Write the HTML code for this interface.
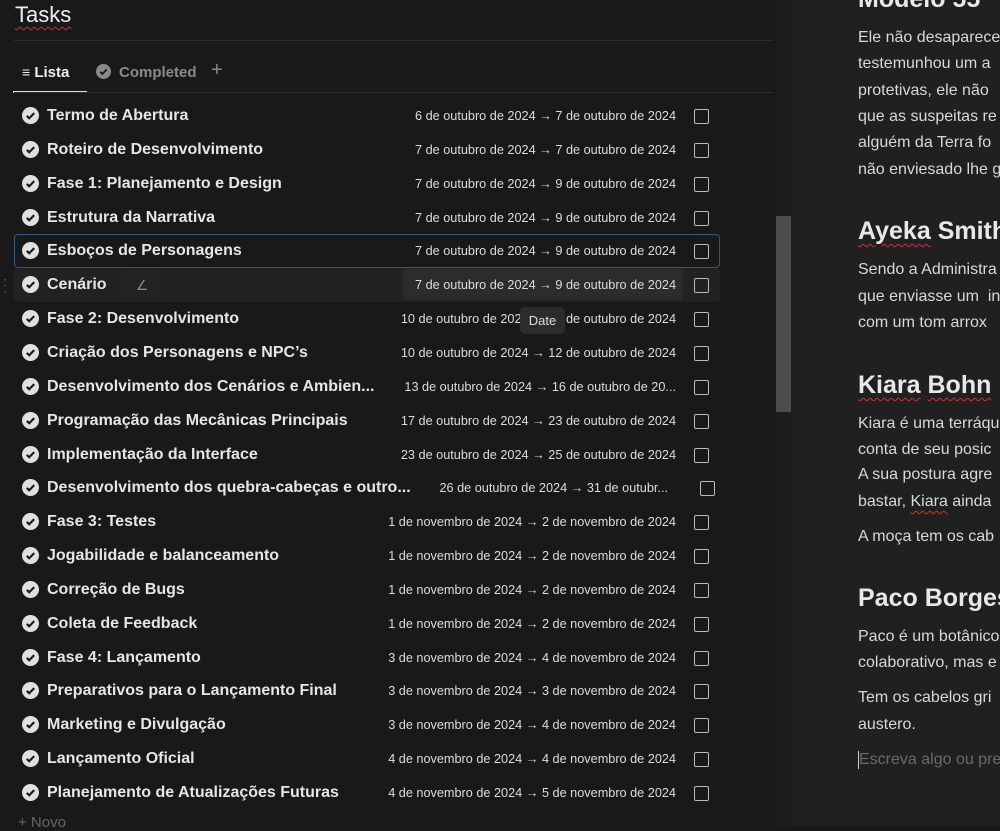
<!DOCTYPE html>
<html><head><meta charset="utf-8"><style>
*{margin:0;padding:0;box-sizing:border-box}
body{width:1000px;height:826px;overflow:hidden;background:#191919;font-family:"Liberation Sans",sans-serif;color:#e3e3e3;position:relative}
#left{position:absolute;left:0;top:0;width:776px;height:826px;background:#191919}
#sb{position:absolute;left:776px;top:0;width:16px;height:826px;background:#1c1c1c}
#thumb{position:absolute;left:776px;top:216px;width:15px;height:196px;background:#4c4c4c}
#right{position:absolute;left:792px;top:0;width:208px;height:826px;background:#202020;overflow:hidden}
.title{position:absolute;left:15px;top:2px;font-size:22px;color:#eee;text-decoration:underline wavy #c33;text-underline-offset:4px;text-decoration-thickness:1px}
.hr{position:absolute;left:14px;width:760px;height:1px;background:#2e2e2e}
.tab{position:absolute;top:64px;font-size:15px;font-weight:bold}
.row{position:absolute;left:14px;width:706px;height:34px}
.row .ic{position:absolute;left:8px;top:8px;width:17px;height:17px}
.row .t{position:absolute;left:33px;top:8px;font-size:16px;font-weight:bold;color:#e6e6e6;white-space:nowrap}
.row .d{position:absolute;right:44px;top:10px;font-size:12.7px;color:#dcdcdc;white-space:nowrap}
.row .cb{position:absolute;left:680px;top:10px;width:15px;height:15px;border:1.5px solid #bbb;border-radius:2px}
.rp{position:absolute;left:66px;white-space:nowrap;font-size:16px;color:#d8d8d8}
.rh{position:absolute;left:66px;white-space:nowrap;font-size:25px;font-weight:bold;color:#e8e8e8}
.sq{text-decoration:underline wavy #c33;text-decoration-thickness:1px;text-underline-offset:4px}
</style></head><body>
<div id="left">
<div class="title">Tasks</div>
<div class="hr" style="top:40px"></div>
<div class="tab" style="left:22px;color:#eee"><span style="font-size:14px;font-weight:normal">&#8801;</span> Lista</div>
<div style="position:absolute;left:13px;top:91px;width:74px;height:2px;background:#ddd"></div>
<svg style="position:absolute;left:96px;top:64px" width="15" height="15" viewBox="0 0 16 16"><circle cx="8" cy="8" r="8" fill="#8a8a8a"/><path d="M4.5 8.3l2.3 2.3 4.7-4.8" stroke="#191919" stroke-width="2" fill="none"/></svg>
<div class="tab" style="left:119px;color:#8a8a8a">Completed</div>
<div class="tab" style="left:211px;top:59px;color:#8a8a8a;font-size:20px;font-weight:normal">+</div>
<div class="hr" style="top:92px"></div>

<div class="row" style="top:234px;border:1px solid #2a5a8a;border-radius:4px"></div>
<div class="row" style="top:268px;background:#222;border-radius:4px"></div>
<div style="position:absolute;left:403px;top:269px;width:280px;height:31px;background:#2c2c2c;border-radius:4px"></div>
<div style="position:absolute;left:126px;top:271px;width:32px;height:28px;background:#232323;border-radius:4px;color:#888;font-size:14px;text-align:center;line-height:28px">&#8736;</div>
<div style="position:absolute;left:3px;top:276px;color:#777;font-size:12px;line-height:6px">&#183;<br>&#183;<br>&#183;</div>
<div id="rows"></div>
<div style="position:absolute;left:520px;top:307px;width:45px;height:27px;background:#2c2c2c;border-radius:5px;font-size:13px;color:#ddd;text-align:center;line-height:27px">Date</div>
<div style="position:absolute;left:18px;top:814px;font-size:15px;color:#666">+ Novo</div>
</div>
<div id="sb"></div><div id="thumb"></div>
<div id="right">
<div class="rh" style="top:-15px">Modelo 55</div>
<div class="rp" style="top:29px">Ele não desaparece</div>
<div class="rp" style="top:55px">testemunhou um a</div>
<div class="rp" style="top:82px">protetivas, ele não</div>
<div class="rp" style="top:108px">que as suspeitas re</div>
<div class="rp" style="top:134px">alguém da Terra fo</div>
<div class="rp" style="top:161px">não enviesado lhe g</div>
<div class="rh" style="top:217px"><span class="sq">Ayeka</span> Smith</div>
<div class="rp" style="top:261px">Sendo a Administra</div>
<div class="rp" style="top:288px">que enviasse um &nbsp;in</div>
<div class="rp" style="top:314px">com um tom arrox</div>
<div class="rh" style="top:371px"><span class="sq">Kiara</span> <span class="sq">Bohn</span></div>
<div class="rp" style="top:415px">Kiara é uma terráqu</div>
<div class="rp" style="top:441px">conta de seu posic</div>
<div class="rp" style="top:466px">A sua postura agre</div>
<div class="rp" style="top:493px">bastar, <span class="sq">Kiara</span> ainda</div>
<div class="rp" style="top:528px">A moça tem os cab</div>
<div class="rh" style="top:584px">Paco Borges</div>
<div class="rp" style="top:628px">Paco é um botânico</div>
<div class="rp" style="top:654px">colaborativo, mas e</div>
<div class="rp" style="top:689px">Tem os cabelos gri</div>
<div class="rp" style="top:716px">austero.</div>
<div class="rp" style="top:751px;color:#6a6a6a;border-left:1px solid #ccc">Escreva algo ou pre</div>
</div>
<script>
var d=[["Termo de Abertura","6 de outubro de 2024 → 7 de outubro de 2024"],
["Roteiro de Desenvolvimento","7 de outubro de 2024 → 7 de outubro de 2024"],
["Fase 1: Planejamento e Design","7 de outubro de 2024 → 9 de outubro de 2024"],
["Estrutura da Narrativa","7 de outubro de 2024 → 9 de outubro de 2024"],
["Esboços de Personagens","7 de outubro de 2024 → 9 de outubro de 2024"],
["Cenário","7 de outubro de 2024 → 9 de outubro de 2024"],
["Fase 2: Desenvolvimento","10 de outubro de 2024 → 12 de outubro de 2024"],
["Criação dos Personagens e NPC’s","10 de outubro de 2024 → 12 de outubro de 2024"],
["Desenvolvimento dos Cenários e Ambien...","13 de outubro de 2024 → 16 de outubro de 20..."],
["Programação das Mecânicas Principais","17 de outubro de 2024 → 23 de outubro de 2024"],
["Implementação da Interface","23 de outubro de 2024 → 25 de outubro de 2024"],
["Desenvolvimento dos quebra-cabeças e outro...","26 de outubro de 2024 → 31 de outubr..."],
["Fase 3: Testes","1 de novembro de 2024 → 2 de novembro de 2024"],
["Jogabilidade e balanceamento","1 de novembro de 2024 → 2 de novembro de 2024"],
["Correção de Bugs","1 de novembro de 2024 → 2 de novembro de 2024"],
["Coleta de Feedback","1 de novembro de 2024 → 2 de novembro de 2024"],
["Fase 4: Lançamento","3 de novembro de 2024 → 4 de novembro de 2024"],
["Preparativos para o Lançamento Final","3 de novembro de 2024 → 3 de novembro de 2024"],
["Marketing e Divulgação","3 de novembro de 2024 → 4 de novembro de 2024"],
["Lançamento Oficial","4 de novembro de 2024 → 4 de novembro de 2024"],
["Planejamento de Atualizações Futuras","4 de novembro de 2024 → 5 de novembro de 2024"]];
var h="";
d.forEach(function(r,i){var top=Math.round(99+i*33.85);
var cbl=(i==11)?686:680;var dr=(i==11)?52:44;
h+='<div class="row" style="top:'+top+'px"><svg class="ic" viewBox="0 0 16 16"><circle cx="8" cy="8" r="8" fill="#e0e0e0"/><path d="M4.5 8.3l2.3 2.3 4.7-4.8" stroke="#191919" stroke-width="2" fill="none"/></svg><div class="t">'+r[0]+'</div><div class="d" style="right:'+dr+'px">'+r[1]+'</div><div class="cb" style="left:'+cbl+'px"></div></div>';});
document.getElementById("rows").innerHTML=h;
</script>
</body></html>
